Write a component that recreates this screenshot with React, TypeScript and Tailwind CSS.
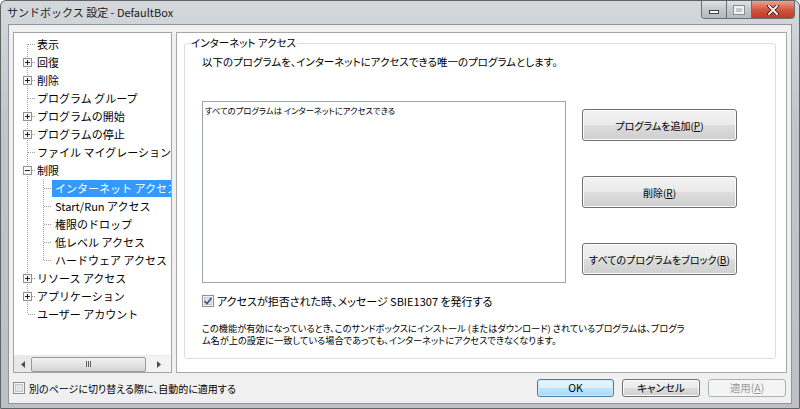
import React from "react";

type Node = { t: string; l: 0 | 1; box?: "+" | "-"; sel?: boolean };

const tree: Node[] = [
  { t: "表示", l: 0 },
  { t: "回復", l: 0, box: "+" },
  { t: "削除", l: 0, box: "+" },
  { t: "プログラム グループ", l: 0 },
  { t: "プログラムの開始", l: 0, box: "+" },
  { t: "プログラムの停止", l: 0, box: "+" },
  { t: "ファイル マイグレーション", l: 0 },
  { t: "制限", l: 0, box: "-" },
  { t: "インターネット アクセス", l: 1, sel: true },
  { t: "Start/Run アクセス", l: 1 },
  { t: "権限のドロップ", l: 1 },
  { t: "低レベル アクセス", l: 1 },
  { t: "ハードウェア アクセス", l: 1 },
  { t: "リソース アクセス", l: 0, box: "+" },
  { t: "アプリケーション", l: 0, box: "+" },
  { t: "ユーザー アカウント", l: 0 },
];

const btn =
  "flex items-center justify-center whitespace-nowrap rounded-[3px] border border-[#707070] bg-[linear-gradient(to_bottom,#f2f2f2_0%,#ebebeb_49%,#dddddd_50%,#cfcfcf_100%)] shadow-[inset_0_0_0_1px_#fbfbfb] text-black font-normal";

function TreeLines() {
  const cy = (i: number) => 11 + 18 * i;
  const dot = { stroke: "#a0a0a0", strokeDasharray: "1 1" };
  return (
    <svg className="absolute left-0 top-0 pointer-events-none" width="60" height="300">
      <line x1="13.5" y1={cy(0)} x2="13.5" y2={cy(15)} {...dot} />
      <line x1="29.5" y1={cy(7) + 9} x2="29.5" y2={cy(12)} {...dot} />
      {tree.map((n, i) =>
        n.l === 0 ? (
          <line key={i} x1="14" y1={cy(i) + 0.5} x2="22" y2={cy(i) + 0.5} {...dot} />
        ) : (
          <line key={i} x1="30" y1={cy(i) + 0.5} x2="38" y2={cy(i) + 0.5} {...dot} />
        )
      )}
      {tree.map((n, i) =>
        n.box ? (
          <g key={"b" + i}>
            <rect x="9.5" y={cy(i) - 3.5} width="8" height="8" fill="#f7f7f7" stroke="#919191" />
            <line x1="11" y1={cy(i) + 0.5} x2="16" y2={cy(i) + 0.5} stroke="#222" />
            {n.box === "+" && <line x1="13.5" y1={cy(i) - 2} x2="13.5" y2={cy(i) + 3} stroke="#222" />}
          </g>
        ) : null
      )}
    </svg>
  );
}

function Check({ on }: { on?: boolean }) {
  return (
    <svg width="12" height="12" viewBox="0 0 12 12" className="shrink-0">
      <rect x="0.5" y="0.5" width="11" height="11" fill="#f4f4f4" stroke="#8e8f8f" />
      <rect x="2.5" y="2.5" width="7" height="7" fill="#e2e4e6" stroke="#c6c9cc" />
      {on && <path d="M2.5 6 L5 8.5 L9.5 3" fill="none" stroke="#3c4f7a" strokeWidth="1.6" />}
    </svg>
  );
}

export default function App() {
  return (
    <div className="w-[800px] h-[409px] bg-[linear-gradient(to_bottom,#d5d8db,#c2c6ca_30%,#bdc1c5)] border border-[#5f6469] rounded-t-[6px] flex flex-col font-['Noto_Sans_CJK_JP','Noto_Sans',sans-serif] text-black overflow-hidden">
      {/* title bar */}
      <div className="h-[23px] flex items-start shrink-0">
        <div className="pl-[6px] pt-[4px] text-[11px] leading-[14px] text-[#1a1a1a]">サンドボックス 設定 - DefaultBox</div>
        <div className="ml-auto mr-[4px] flex rounded-b-[4px] border border-t-0 border-[#6b7076] overflow-hidden h-[18px]">
          <div className="w-[25px] flex items-center justify-center bg-[linear-gradient(to_bottom,#dfe2e5,#c3c8cc_50%,#b4b9be)] border-r border-[#6b7076]">
            <div className="w-[10px] h-[4px] bg-white border border-[#3b3f44] mt-[4px]" />
          </div>
          <div className="w-[25px] flex items-center justify-center bg-[linear-gradient(to_bottom,#dfe2e5,#c3c8cc_50%,#b4b9be)] border-r border-[#6b7076]">
            <div className="w-[10px] h-[8px] border-2 border-[#f0f0f0] outline outline-1 outline-[#8a8f94]" />
          </div>
          <div className="w-[42px] flex items-center justify-center bg-[linear-gradient(to_bottom,#e8a493,#d2593f_50%,#c2381f)]">
            <svg width="12" height="10" viewBox="0 0 12 10">
              <path d="M2 1 L10 9 M10 1 L2 9" stroke="#3a1a14" strokeWidth="3.4" strokeLinecap="square" />
              <path d="M2 1 L10 9 M10 1 L2 9" stroke="#ffffff" strokeWidth="1.8" strokeLinecap="square" />
            </svg>
          </div>
        </div>
      </div>

      {/* client */}
      <div className="mx-[7px] mb-[4px] flex-1 bg-[#f0f0f0] border border-[#8f969c] flex flex-col">
        <div className="flex gap-[4px] px-[4px] pt-[7px] h-[348px]">
          {/* tree */}
          <div className="w-[159px] border border-[#a3a3a3] bg-white flex flex-col overflow-hidden">
            <div className="relative flex-1 overflow-hidden pt-[2px]">
              <TreeLines />
              {tree.map((n, i) => (
                <div key={i} className="h-[18px] flex items-center whitespace-nowrap text-[11px] leading-[18px]">
                  {n.sel ? (
                    <div className="ml-[38px] pl-[3px] pr-[20px] bg-[#3399ff] text-white h-[17px] flex items-center">{n.t}</div>
                  ) : (
                    <div className={n.l === 0 ? "pl-[23px]" : "pl-[41px]"}>{n.t}</div>
                  )}
                </div>
              ))}
            </div>
            <div className="h-[17px] flex items-center bg-[linear-gradient(to_right,#e8e8e8,#f4f4f4)] border-t border-[#eaeaea]">
              <div className="w-[17px] flex justify-center">
                <svg width="4" height="7" viewBox="0 0 4 7"><path d="M4 0 L0 3.5 L4 7 Z" fill="#505050" /></svg>
              </div>
              <div className="w-[115px] h-[15px] rounded-[2px] border border-[#9a9a9a] bg-[linear-gradient(to_bottom,#f2f2f2,#e4e4e4_50%,#d4d4d4)] flex items-center justify-center">
                <div className="flex gap-[1px]">
                  <div className="w-[1px] h-[6px] bg-[#606060]" />
                  <div className="w-[1px] h-[6px] bg-[#606060]" />
                  <div className="w-[1px] h-[6px] bg-[#606060]" />
                </div>
              </div>
              <div className="flex-1 flex justify-center">
                <svg width="4" height="7" viewBox="0 0 4 7"><path d="M0 0 L4 3.5 L0 7 Z" fill="#505050" /></svg>
              </div>
            </div>
          </div>

          {/* right panel */}
          <div className="flex-1 border border-[#a8a8a8] bg-white flex flex-col">
            <fieldset className="mt-[3px] ml-[7px] mr-[10px] mb-[13px] flex-1 border border-[#d5dfe5] rounded-[3px] pl-[5px] min-w-0">
              <legend className="px-[1px] text-[10.5px] leading-[14px] [font-feature-settings:'palt']">インターネット アクセス</legend>
              <div className="pl-[12px] [font-feature-settings:'palt']">
                <div className="mt-[5px] text-[10.5px] leading-[14px]">以下のプログラムを、インターネットにアクセスできる唯一のプログラムとします。</div>
                <div className="mt-[32px] flex">
                  <div className="w-[364px] h-[182px] border border-[#9ea3a8] bg-white pl-[2px] pt-[2px] text-[8.3px] leading-[12px]">
                    すべてのプログラムは インターネットにアクセスできる
                  </div>
                  <div className="ml-[16px] w-[155px] pt-[8px] flex flex-col gap-[35px] text-[10px]">
                    <button className={`${btn} h-[32px]`}>プログラムを追加(<u>P</u>)</button>
                    <button className={`${btn} h-[32px]`}>削除(<u>R</u>)</button>
                    <button className={`${btn} h-[32px]`}>すべてのプログラムをブロック(<u>B</u>)</button>
                  </div>
                </div>
                <div className="mt-[11px] flex items-center gap-[3px] text-[11px] leading-[14px]">
                  <Check on />
                  <span>アクセスが拒否された時、メッセージ SBIE1307 を発行する</span>
                </div>
                <div className="mt-[14px] text-[9.2px] whitespace-nowrap flex flex-col">
                  <span className="leading-[12px] h-[12px]">この機能が有効になっているとき、このサンドボックスにインストール (またはダウンロード) されているプログラムは、プログラ</span>
                  <span className="leading-[12px] h-[12px]">ム名が上の設定に一致している場合であっても、インターネットにアクセスできなくなります。</span>
                </div>
              </div>
            </fieldset>
          </div>
        </div>

        {/* bottom row */}
        <div className="flex-1 flex items-center pl-[4px] pr-[5px]">
          <div className="flex items-center gap-[4px] text-[10px] [font-feature-settings:'palt']">
            <Check />
            <span>別のページに切り替える際に、自動的に適用する</span>
          </div>
          <div className="ml-auto flex gap-[8px] text-[10.5px] [font-feature-settings:'palt']">
            <button className="w-[77px] h-[18px] flex items-center justify-center rounded-[3px] border border-[#3c7fb1] bg-[linear-gradient(to_bottom,#eaf6fd,#d9f0fc_50%,#bee6fd_51%,#a7d9f5)] shadow-[inset_0_0_0_1px_#d2ebf9]">OK</button>
            <button className={`${btn} w-[78px] h-[18px]`}>キャンセル</button>
            <button className="w-[78px] h-[18px] flex items-center justify-center rounded-[3px] border border-[#adb2b5] bg-[#f4f4f4] text-[#9a9a9a]">適用(<u>A</u>)</button>
          </div>
        </div>
      </div>
    </div>
  );
}
